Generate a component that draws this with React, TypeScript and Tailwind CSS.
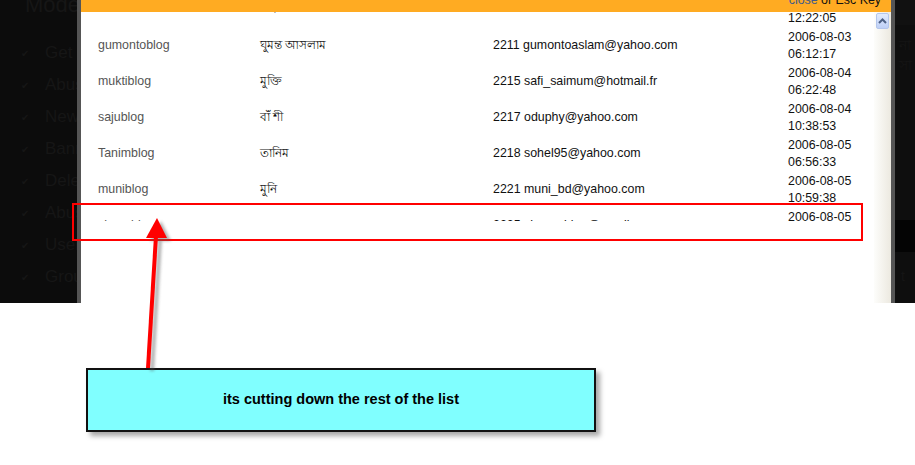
import React from "react";

type Row = { name: string; bn: string; mail: string; date: string; time: string };

// list rows as they appear in the popup (first one scrolled under the bar)
const rows: Row[] = [
  { name: "ekusheyblog", bn: "একুশে", mail: "2209 ekushey_bd@yahoo.com", date: "2006-08-03", time: "12:22:05" },
  { name: "gumontoblog", bn: "ঘুমন্ত আসলাম", mail: "2211 gumontoaslam@yahoo.com", date: "2006-08-03", time: "06:12:17" },
  { name: "muktiblog", bn: "মুক্তি", mail: "2215 safi_saimum@hotmail.fr", date: "2006-08-04", time: "06:22:48" },
  { name: "sajublog", bn: "বাঁ শী", mail: "2217 oduphy@yahoo.com", date: "2006-08-04", time: "10:38:53" },
  { name: "Tanimblog", bn: "তানিম", mail: "2218 sohel95@yahoo.com", date: "2006-08-05", time: "06:56:33" },
  { name: "muniblog", bn: "মুনি", mail: "2221 muni_bd@yahoo.com", date: "2006-08-05", time: "10:59:38" },
];

const sideItems = ["Get IP list", "Abuse report", "New users", "Banned users", "Deleted posts", "Abuse list", "User groups", "Groups"];

const cols = "grid grid-cols-[162px_233px_295px_1fr] pl-[17px]";

const ListRow = ({ r, top }: { r: Row; top?: boolean }) => {
  // the scrolled-off row sits a bit higher, only descenders peek out
  const nudge = top ? "mb-[7px]" : "";
  return (
    <div className={`${cols} h-[36px] items-center`}>
      <span className={`text-[#555] ${nudge}`}>{r.name}</span>
      <span className={`text-[#111] font-['Noto_Sans','Liberation_Sans',sans-serif] ${nudge}`}>{r.bn}</span>
      <span className={`text-[#111] ${nudge}`}>{r.mail}</span>
      <div className="self-start pt-[1.5px] leading-[17px] text-[#111]">
        <div>{r.date}</div>
        <div>{r.time}</div>
      </div>
    </div>
  );
};

const App = () => {
  const last = { name: "shuvoblog", bn: "শুভ", mail: "2225 shuvo_blog@gmail.com" };

  return (
    <div className="relative w-[915px] h-[465px] overflow-hidden bg-white font-['Liberation_Sans',Arial,sans-serif]">
      <section className="flex h-[303px] bg-[#0c0c0c]">
        {/* page behind the overlay */}
        <div className="w-[77px] shrink-0 overflow-hidden whitespace-nowrap text-[#161616]">
          <div className="mt-[-6px] pl-[25px] text-[22px] leading-[22px]">Moderation</div>
          <ul className="mt-[21px]">
            {sideItems.map((s, i) => (
              <li key={i} className="flex h-[32px] items-center pl-[21px] text-[17px]">
                <span className="w-[24px] shrink-0 text-[10px] text-[#161616]">✔</span>
                <span className="shrink-0">{s}</span>
              </li>
            ))}
          </ul>
        </div>

        {/* popup */}
        <div className="flex w-[818px] shrink-0 flex-col border-x-4 border-[#555] bg-white text-[12.4px]">
          <header className="flex h-[12px] shrink-0 justify-end overflow-hidden bg-[#ffab22] pr-[10px]">
            <div className="mt-[-6px] leading-[12px] text-[#111]">
              <span className="text-[#3d5a8a]">close</span> or Esc Key
            </div>
          </header>
          <div className="flex flex-1 overflow-hidden">
            <div className="flex-1 overflow-hidden">
              <div className="mt-[-21px]">
                {rows.map((r, i) => (
                  <ListRow key={i} r={r} top={i === 0} />
                ))}
                <div className={`${cols} h-[36px]`}>
                  <div className="h-[14px] overflow-hidden pt-[9px] text-[#555]">{last.name}</div>
                  <div className="h-[14px] overflow-hidden pt-[9px] text-[#bbb]">{last.bn}</div>
                  <div className="h-[14px] overflow-hidden pt-[9px] text-[#111]">{last.mail}</div>
                  <div className="pt-[1.5px] leading-[17px] text-[#111]">2006-08-05</div>
                </div>
              </div>
            </div>
            <div className="w-[17px] shrink-0 bg-gradient-to-r from-[#fdfdfb] to-[#ece9e0] pt-[1px]">
              <div className="mx-[2px] flex h-[16px] items-center justify-center rounded-[2px] border border-[#b4c6ec] bg-gradient-to-b from-[#e2ebfd] to-[#bfd0f6]">
                <svg width="9" height="6" viewBox="0 0 9 6">
                  <path d="M1 5 L4.5 1.5 L8 5" fill="none" stroke="#4d6185" strokeWidth="2" />
                </svg>
              </div>
            </div>
          </div>
        </div>

        {/* right edge of the page */}
        <div className="flex w-[20px] shrink-0 flex-col overflow-hidden text-[14px] text-[#151515]">
          <div className="h-[25px] bg-[#111]" />
          <div className="h-[195px] bg-[#0e0e0e] pl-[4px] pt-[10px] leading-[20px]">না<br />সা</div>
          <div className="h-[32px] bg-[#040404]" />
          <div className="flex-1 bg-[#0e0e0e] pl-[6px] pt-[14px]">t</div>
        </div>
      </section>

      {/* annotation */}
      <div className="absolute left-[72px] top-[203px] h-[38px] w-[791px] border-2 border-[#ff0000]" />

      <svg className="pointer-events-none absolute left-0 top-0" width="915" height="465">
        <defs>
          <filter id="sh" x="-50%" y="-50%" width="200%" height="200%">
            <feGaussianBlur stdDeviation="1.6" />
          </filter>
        </defs>
        <g transform="translate(4 3)" filter="url(#sh)" opacity="0.45">
          <line x1="148" y1="368" x2="156" y2="236" stroke="#555" strokeWidth="4" />
          <polygon points="157,218 146,238 167,238" fill="#555" />
        </g>
        <line x1="148" y1="368" x2="156" y2="236" stroke="#ff0000" strokeWidth="4" />
        <polygon points="157,218 146,238 167,238" fill="#ff0000" />
      </svg>

      <div className="ml-[86px] mt-[65px] flex h-[64px] w-[510px] items-center justify-center border-2 border-[#111] bg-[#80ffff] text-[14.5px] font-bold text-black shadow-[4px_4px_5px_rgba(0,0,0,0.35)]">
        its cutting down the rest of the list
      </div>
    </div>
  );
};

export default App;
